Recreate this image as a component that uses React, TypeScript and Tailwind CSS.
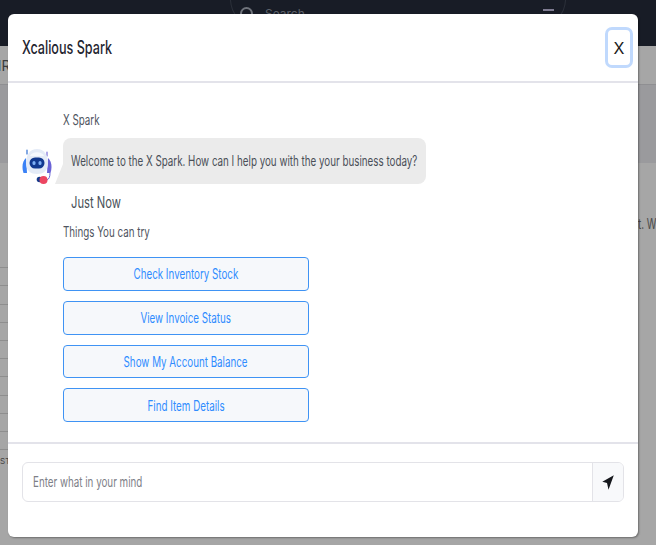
import React from "react";

const Squish = ({ children, className = "" }: { children: React.ReactNode; className?: string }) => (
  <span className={`inline-block whitespace-nowrap scale-x-[0.7] ${className}`}>{children}</span>
);

const Robot = () => (
  <svg width="30" height="38" viewBox="0 0 30 38" fill="none">
    <path d="M5 2 L5 6" stroke="#2f6fd0" strokeWidth="1.2" strokeLinecap="round" />
    <path d="M25 4 L25 8" stroke="#7a6fd8" strokeWidth="1.2" strokeLinecap="round" />
    <path d="M4 10 C0.500 13 -0.500 19 1.500 25 L5 25 Z" fill="#3b82f6" />
    <path d="M26 10 C29.500 13 30.500 19 28.500 25 L25 25 Z" fill="#6a63d6" />
    <path d="M15 1 C22 1 26 7 26 15 C26 23 21 26 15 26 C9 26 4 23 4 15 C4 7 8 1 15 1 Z" fill="#e4ebf7" />
    <path d="M8 8 C10 3 20 3 22 8 Z" fill="#f6f9fe" />
    <rect x="7.500" y="9.500" width="15" height="11" rx="5.500" fill="#12398f" />
    <rect x="10.500" y="13" width="3" height="4" rx="1.500" fill="#7fb0f5" />
    <rect x="16.500" y="13" width="3" height="4" rx="1.500" fill="#7fb0f5" />
    <path d="M28 25 C28 29 27 31 25 32" stroke="#6a63d6" strokeWidth="1" />
    <circle cx="17.500" cy="31.500" r="2.800" fill="#143a8c" />
    <circle cx="21.500" cy="32" r="4" fill="#ec4561" />
  </svg>
);

const actions = ["Check Inventory Stock", "View Invoice Status", "Show My Account Balance", "Find Item Details"];
const rows = Array.from({ length: 11 });

export default function App() {
  return (
    <div className="relative h-[545px] w-[656px] overflow-hidden bg-[#a5a5a5] font-['Inter',sans-serif]">
      <header className="flex h-[46px] items-start bg-[#181c26] pl-[230px]">
        <div className="flex h-[30px] w-[336px] -translate-y-px items-center justify-between rounded-b-[30px] border border-t-0 border-[#2c303a] pl-[9px] pr-[11px]">
          <div className="flex items-center gap-[12px]">
            <span className="h-[13px] w-[13px] rounded-full border-2 border-[#70747c]" />
            <span className="text-[12px] text-[#5d616a]">Search</span>
          </div>
          <span className="h-[10px] w-[11px] border-t-2 border-[#7f7c92]" />
        </div>
      </header>
      <div className="flex h-[39px] items-center border-b border-[#8f8f92] bg-[#a6a6a6] text-[14px] text-[#3c3c3c]">
        <span className="-ml-[9px]">HR</span>
      </div>
      <div className="h-[78px] bg-[#9a9a9d]" />
      <div className="flex h-[382px] bg-[#a6a6a6]">
        <div className="w-[8px] pt-[87px]">
          {rows.map((_, i) => (
            <div key={i} className="h-[18.200px] border-b border-[#8e8e8e]" />
          ))}
          <div className="mt-[5px] text-[8px] text-[#444]">ST</div>
        </div>
        <div className="ml-auto mt-[50px] w-[18px] text-[14px] text-[#4a4a4a]">
          <Squish className="origin-left">t. W</Squish>
        </div>
      </div>

      <div className="absolute left-[8px] top-[14px] flex h-[523px] w-[630px] flex-col rounded-[6px] bg-white shadow-[1px_1px_2px_rgba(0,0,0,0.35)]">
        <div className="flex h-[69px] shrink-0 items-center justify-between border-b-2 border-[#e3e3ea] pl-[14px] pr-[5px]">
          <Squish className="origin-left text-[18px] font-medium text-[#1f2530]">Xcalious Spark</Squish>
          <button className="flex h-[41px] w-[28px] items-center justify-center rounded-[7px] border-[3px] border-[#c0d9fd] bg-white text-[16px] text-[#1c1c1c]">
            X
          </button>
        </div>

        <div className="flex min-h-0 flex-1 flex-col border-b-2 border-[#e3e3ea] pl-[55px] pt-[28px]">
          <Squish className="origin-left text-[14px] leading-[18px] text-[#4f5560]">X Spark</Squish>
          <div className="relative mt-[9px] flex h-[46px] w-[363px] items-center rounded-[8px] rounded-bl-none bg-[#ebebeb] pb-[2px] pl-[8px]">
            <Squish className="origin-left text-[14px] text-[#4a4f58]">
              Welcome to the X Spark. How can I help you with the your business today?
            </Squish>
            <span className="absolute bottom-0 left-[-8px] h-[20px] w-[8px] bg-[#ebebeb] [clip-path:polygon(100%_0,100%_100%,0_100%)]" />
            <span className="absolute left-[-41px] top-[10px]">
              <Robot />
            </span>
          </div>
          <Squish className="ml-[8px] mt-[8px] origin-left text-[16px] leading-[20px] text-[#495057]">Just Now</Squish>
          <Squish className="mt-[10px] origin-left text-[14px] leading-[20px] text-[#4f5560]">Things You can try</Squish>
          <div className="mt-[15px] flex w-[246px] flex-col gap-[10px]">
            {actions.map((a) => (
              <button
                key={a}
                className="flex h-[33.800px] items-center justify-center rounded-[4px] border-[1.500px] border-[#3f93f4] bg-[#f6f8fb] text-[14px] text-[#2f8cff]"
              >
                <Squish>{a}</Squish>
              </button>
            ))}
          </div>
        </div>

        <div className="shrink-0 px-[14px] pb-[35px] pt-[18px]">
          <div className="flex h-[40px] overflow-hidden rounded-[6px] border-[1.500px] border-[#e3e3e8]">
            <div className="flex flex-1 items-center pb-[1px] pl-[10px] text-[14px] text-[#7d8087]">
              <Squish className="origin-left">Enter what in your mind</Squish>
            </div>
            <button className="flex w-[31px] items-center justify-center border-l border-[#e3e3e8] bg-[#f8f9fb]">
              <svg width="12" height="15" viewBox="0 0 12 15">
                <path d="M11.800 0.200 L0.300 6.800 L5 8 L6.500 14.800 Z" fill="#16181d" />
              </svg>
            </button>
          </div>
        </div>
      </div>
    </div>
  );
}
